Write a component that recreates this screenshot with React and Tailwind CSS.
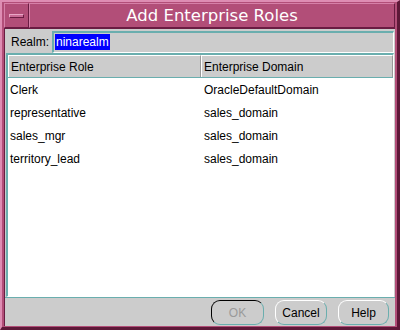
export default function App() {
  const rows = [
    ["Clerk", "OracleDefaultDomain"],
    ["representative", "sales_domain"],
    ["sales_mgr", "sales_domain"],
    ["territory_lead", "sales_domain"],
  ];
  return (
    <div className="w-[400px] h-[330px] bg-[#b24e78] border-t-2 border-l-2 border-[#de8db3] border-r-[3px] border-b-[3px] border-r-[#5e1838] border-b-[#5e1838] flex flex-col px-[2px] pt-[1px] pb-[1px] overflow-hidden" style={{ fontFamily: '"Liberation Sans", Arial, sans-serif' }}>
      <div className="flex h-[25px] shrink-0">
        <div className="w-[25px] h-[25px] border-t border-l border-[#d680a8] border-r border-b border-r-[#6a1c42] border-b-[#6a1c42] flex items-center justify-center">
          <div className="w-[15px] h-[4px] bg-[#c96a95] border-t border-l border-[#e9a6c6] border-r border-b border-r-[#6a1c42] border-b-[#6a1c42] mt-[1px]" />
        </div>
        <div className="flex-1 h-[25px] border-t border-l border-[#d680a8] border-r border-b border-r-[#6a1c42] border-b-[#6a1c42] flex items-center justify-center text-white text-[16.5px] leading-none pt-[1px]" style={{ fontFamily: '"DejaVu Sans", sans-serif' }}>
          Add Enterprise Roles
        </div>
      </div>
      <div className="flex-1 bg-[#cccccc] border-l border-t border-[#6a1c42] flex flex-col">
        <div className="flex items-center h-[24px] shrink-0 pt-[1px]">
          <span className="text-[12px] text-black ml-[6px] w-[41px]">Realm:</span>
          <div className="flex-1 h-[22px] mr-[1px] border-t-2 border-l-2 border-[#6aaeae] border-r border-b border-r-white border-b-white flex items-center pl-[1px]">
            <span className="bg-[#0000ff] text-white text-[12px] leading-[16px] px-[1px]">ninarealm</span>
          </div>
        </div>
        <div className="flex-1 mx-[1px] mr-[1px] border-t-2 border-l-2 border-[#6aaeae] border-r border-b border-r-white border-b-white flex flex-col bg-white">
          <div className="flex h-[23px] shrink-0 bg-[#cccccc] border-b border-[#6aaeae] text-[12px] text-black">
            <div className="w-[193px] border-t border-l border-white border-r border-r-[#999999] flex items-center pl-[2px]">Enterprise Role</div>
            <div className="flex-1 border-t border-l border-white border-r border-r-[#999999] flex items-center pl-[2px]">Enterprise Domain</div>
          </div>
          {rows.map(([a, b]) => (
            <div key={a} className="flex h-[23px] items-center text-[12px] text-black">
              <div className="w-[193px] pl-[2px]">{a}</div>
              <div className="flex-1 pl-[3px]">{b}</div>
            </div>
          ))}
        </div>
        <div className="h-[29px] shrink-0 border-t border-[#6aaeae] flex items-center justify-end gap-[11px] pr-[6px] pt-[1px]">
          <button className="w-[53px] h-[25px] rounded-[9px] border border-black border-r-[#6aaeae] border-b-[#6aaeae] text-[12px] text-[#9a9a9a]">OK</button>
          <button className="w-[52px] h-[25px] rounded-[9px] border border-[#6aaeae] border-t-white border-l-white text-[12px] text-black">Cancel</button>
          <button className="w-[51px] h-[25px] rounded-[9px] border border-[#6aaeae] border-t-white border-l-white text-[12px] text-black">Help</button>
        </div>
      </div>
    </div>
  );
}
